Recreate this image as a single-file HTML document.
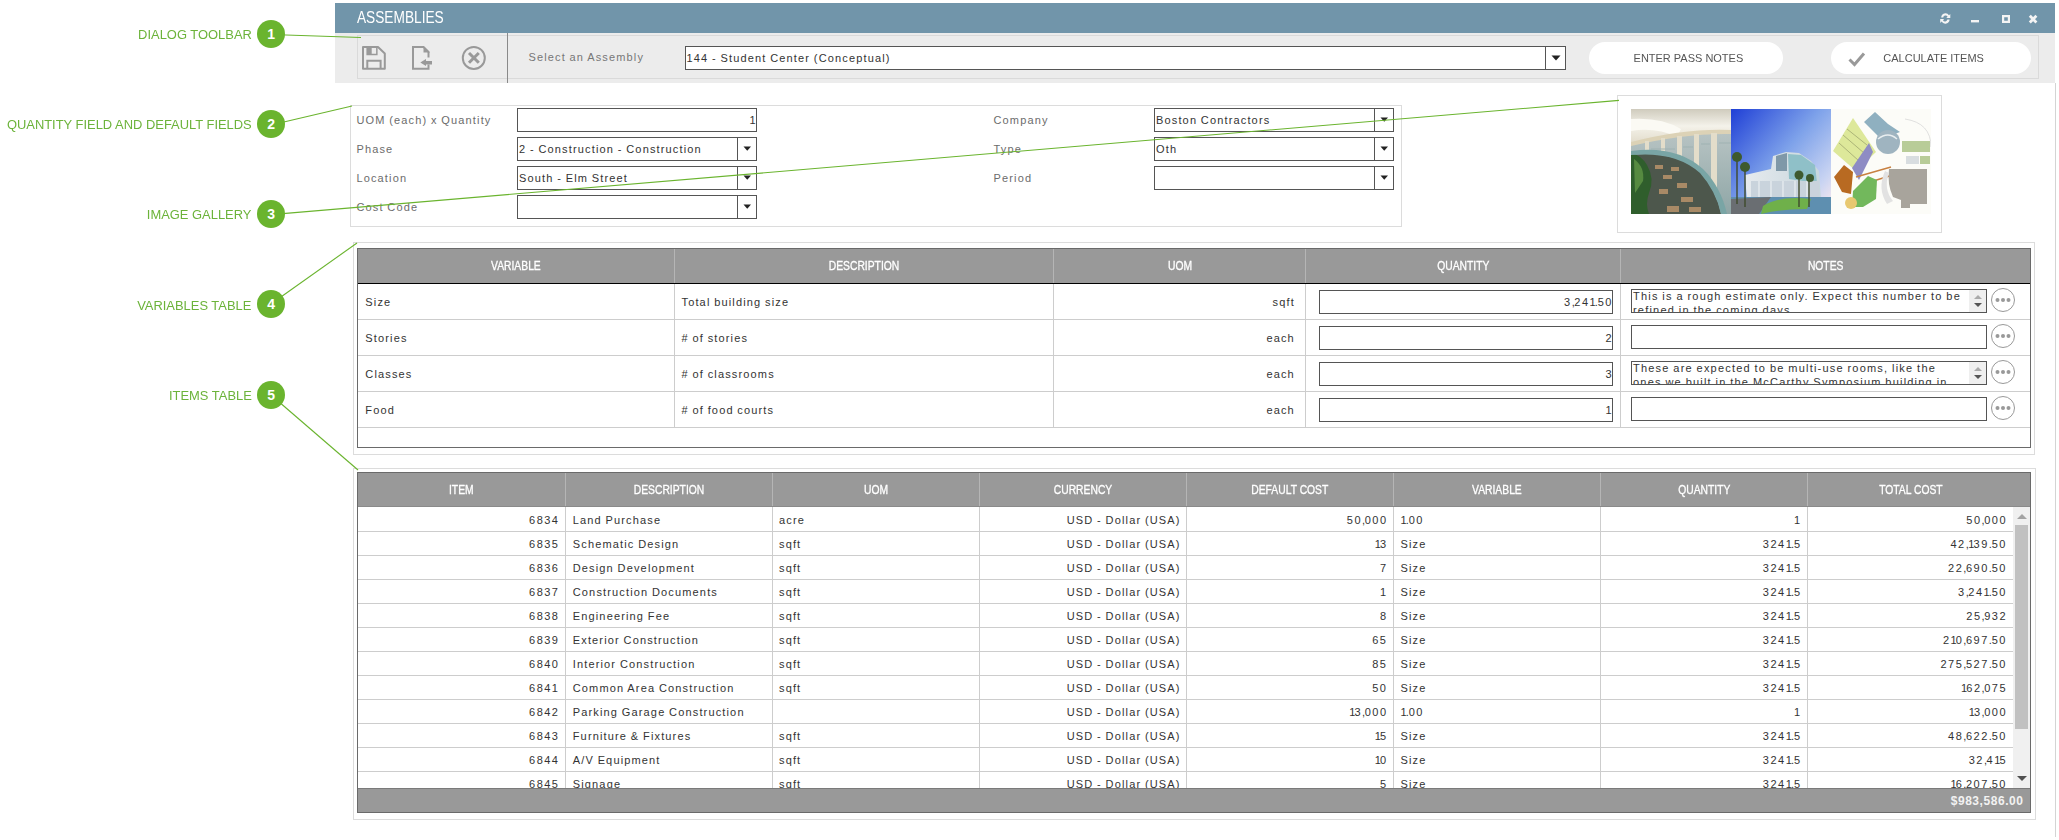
<!DOCTYPE html>
<html><head><meta charset="utf-8"><title>Assemblies</title>
<style>
html,body{margin:0;padding:0;background:#fff;}
body{width:2059px;height:840px;position:relative;overflow:hidden;font-family:"Liberation Sans", sans-serif;}
</style></head><body>
<div style="position:absolute;top:28.46px;font-size:13.4px;line-height:13.4px;color:#6cb33a;white-space:nowrap;right:1807.4px;"><span style="display:inline-block;transform:scaleX(0.965);transform-origin:right;">DIALOG TOOLBAR</span></div>
<div style="position:absolute;top:118.26px;font-size:13.4px;line-height:13.4px;color:#6cb33a;white-space:nowrap;right:1807.4px;"><span style="display:inline-block;transform:scaleX(0.965);transform-origin:right;">QUANTITY FIELD AND DEFAULT FIELDS</span></div>
<div style="position:absolute;top:207.96px;font-size:13.4px;line-height:13.4px;color:#6cb33a;white-space:nowrap;right:1807.4px;"><span style="display:inline-block;transform:scaleX(0.965);transform-origin:right;">IMAGE GALLERY</span></div>
<div style="position:absolute;top:298.66px;font-size:13.4px;line-height:13.4px;color:#6cb33a;white-space:nowrap;right:1807.4px;"><span style="display:inline-block;transform:scaleX(0.965);transform-origin:right;">VARIABLES TABLE</span></div>
<div style="position:absolute;top:389.46px;font-size:13.4px;line-height:13.4px;color:#6cb33a;white-space:nowrap;right:1807.4px;"><span style="display:inline-block;transform:scaleX(0.965);transform-origin:right;">ITEMS TABLE</span></div>
<div style="position:absolute;left:335px;top:3px;width:1720px;height:30px;box-sizing:border-box;background:#7195aa;"></div>
<div style="position:absolute;top:10.06px;font-size:16px;line-height:16px;color:#fff;white-space:nowrap;left:357px;"><span style="display:inline-block;transform:scaleX(0.855);transform-origin:left;">ASSEMBLIES</span></div>
<svg style="position:absolute;left:1936px;top:10px" width="110" height="18" viewBox="1936 10 110 18">
<g fill="#f4f4f4">
<path d="M1941.2 17.5 A4.3 4.3 0 0 1 1949 15.2 L1950.3 13.9 L1950.3 18 L1946.3 18 L1947.6 16.7 A2.4 2.4 0 0 0 1943.2 17.5 Z"/>
<path d="M1949.6 19.6 A4.3 4.3 0 0 1 1941.6 21.6 L1940.2 23 L1940.2 18.9 L1944.2 18.9 L1943 20.2 A2.4 2.4 0 0 0 1947.4 19.6 Z"/>
<rect x="1971" y="20" width="8" height="2.4"/>
<path d="M2002 15 H2010 V23 H2002 Z M2004.2 17.2 V20.8 H2007.8 V17.2 Z" fill-rule="evenodd"/>
</g>
<path d="M2029.8 15.8 L2036.4 22.4 M2036.4 15.8 L2029.8 22.4" stroke="#f4f4f4" stroke-width="2.8"/>
</svg>
<div style="position:absolute;left:335px;top:33px;width:1720px;height:50px;box-sizing:border-box;background:#ececec;"></div>
<div style="position:absolute;left:357px;top:35px;width:1682px;height:44px;box-sizing:border-box;border:1px solid #dadada;"></div>
<div style="position:absolute;left:507px;top:33px;width:1px;height:50px;box-sizing:border-box;background:#8a8a8a;"></div>
<svg style="position:absolute;left:355px;top:40px" width="140" height="36" viewBox="355 40 140 36">
<g fill="none" stroke="#999" stroke-width="2">
<path d="M363 47 H378 L384.8 53.5 V68.7 H363 Z" stroke-linejoin="round"/>
<path d="M367.3 68.7 V60.8 H380.6 V68.7"/>
</g>
<path d="M366.4 46.5 H377.6 V55.2 H366.4 Z M371.7 47.4 V53.7 H376.1 V47.4 Z" fill="#999" fill-rule="evenodd"/>
<g fill="none" stroke="#999" stroke-width="2">
<path d="M428.5 57.5 V52 L423.5 47 H413 V68.7 H428.5 V64.5"/>
</g>
<path d="M423.5 46 L430 52.5 H423.5 Z" fill="#999"/>
<path d="M420.3 62.5 L426 58.9 V61 H432 V64.4 H426 V65.9 Z" fill="#999"/>
<circle cx="473.8" cy="57.9" r="11" fill="none" stroke="#999" stroke-width="2"/>
<path d="M469 53 L478.8 62.8 M478.8 53 L469 62.8" stroke="#999" stroke-width="3"/>
</svg>
<div style="position:absolute;top:52.39px;font-size:11px;line-height:11px;color:#777;white-space:nowrap;letter-spacing:1.15px;word-spacing:-0.5px;left:528.4px;">Select an Assembly</div>
<div style="position:absolute;left:685px;top:46px;width:881px;height:24px;box-sizing:border-box;background:#fff;border:1px solid #555;"></div>
<div style="position:absolute;left:1545px;top:46px;width:1px;height:24px;box-sizing:border-box;background:#555;"></div>
<svg style="position:absolute;left:1551px;top:55px" width="10" height="6"><path d="M0.5 0.5 H9.5 L5 5.5 Z" fill="#222"/></svg>
<div style="position:absolute;top:52.79px;font-size:11px;line-height:11px;color:#333;white-space:nowrap;letter-spacing:1.15px;word-spacing:-0.5px;left:686.5px;">144 - Student Center (Conceptual)</div>
<div style="position:absolute;left:1589px;top:42px;width:194px;height:32px;box-sizing:border-box;background:#fff;border-radius:16px;"></div>
<div style="position:absolute;top:53.07px;font-size:11.5px;line-height:11.5px;color:#555;white-space:nowrap;left:1388.75px;width:600px;text-align:center;"><span style="display:inline-block;transform:scaleX(0.955);transform-origin:center;">ENTER PASS NOTES</span></div>
<div style="position:absolute;left:1831px;top:42px;width:200px;height:32px;box-sizing:border-box;background:#fff;border-radius:16px;"></div>
<svg style="position:absolute;left:1846px;top:50px" width="22" height="18"><path d="M3.5 9.5 L8.5 14.5 L18 3.5" fill="none" stroke="#999" stroke-width="3"/></svg>
<div style="position:absolute;top:53.07px;font-size:11.5px;line-height:11.5px;color:#555;white-space:nowrap;left:1634px;width:600px;text-align:center;"><span style="display:inline-block;transform:scaleX(0.955);transform-origin:center;">CALCULATE ITEMS</span></div>
<div style="position:absolute;left:2055px;top:83px;width:1px;height:754px;box-sizing:border-box;background:#d4d4d4;"></div>
<div style="position:absolute;left:350px;top:105px;width:1052px;height:122px;box-sizing:border-box;border:1px solid #dcdcdc;"></div>
<div style="position:absolute;top:115.09px;font-size:11px;line-height:11px;color:#6c6c6c;white-space:nowrap;letter-spacing:1.15px;word-spacing:-0.5px;left:356.4px;">UOM (each) x Quantity</div>
<div style="position:absolute;top:144.09px;font-size:11px;line-height:11px;color:#6c6c6c;white-space:nowrap;letter-spacing:1.15px;word-spacing:-0.5px;left:356.4px;">Phase</div>
<div style="position:absolute;top:173.09px;font-size:11px;line-height:11px;color:#6c6c6c;white-space:nowrap;letter-spacing:1.15px;word-spacing:-0.5px;left:356.4px;">Location</div>
<div style="position:absolute;top:202.09px;font-size:11px;line-height:11px;color:#6c6c6c;white-space:nowrap;letter-spacing:1.15px;word-spacing:-0.5px;left:356.4px;">Cost Code</div>
<div style="position:absolute;top:115.09px;font-size:11px;line-height:11px;color:#6c6c6c;white-space:nowrap;letter-spacing:1.15px;word-spacing:-0.5px;left:993.5px;">Company</div>
<div style="position:absolute;top:144.09px;font-size:11px;line-height:11px;color:#6c6c6c;white-space:nowrap;letter-spacing:1.15px;word-spacing:-0.5px;left:993.5px;">Type</div>
<div style="position:absolute;top:173.09px;font-size:11px;line-height:11px;color:#6c6c6c;white-space:nowrap;letter-spacing:1.15px;word-spacing:-0.5px;left:993.5px;">Period</div>
<div style="position:absolute;left:517px;top:108px;width:240px;height:24px;box-sizing:border-box;background:#fff;border:1px solid #555;"></div>
<div style="position:absolute;top:115.09px;font-size:11px;line-height:11px;color:#333;white-space:nowrap;letter-spacing:1.5px;right:1302.0px;">1</div>
<div style="position:absolute;left:517px;top:137px;width:240px;height:24px;box-sizing:border-box;background:#fff;border:1px solid #555;"></div>
<div style="position:absolute;left:737px;top:137px;width:1px;height:24px;box-sizing:border-box;background:#555;"></div>
<svg style="position:absolute;left:743px;top:146px" width="9" height="6"><path d="M0.5 0.5 H8 L4.25 4.8 Z" fill="#222"/></svg>
<div style="position:absolute;top:144.09px;font-size:11px;line-height:11px;color:#333;white-space:nowrap;letter-spacing:1.15px;word-spacing:-0.5px;left:519px;">2 - Construction - Construction</div>
<div style="position:absolute;left:517px;top:166px;width:240px;height:24px;box-sizing:border-box;background:#fff;border:1px solid #555;"></div>
<div style="position:absolute;left:737px;top:166px;width:1px;height:24px;box-sizing:border-box;background:#555;"></div>
<svg style="position:absolute;left:743px;top:175px" width="9" height="6"><path d="M0.5 0.5 H8 L4.25 4.8 Z" fill="#222"/></svg>
<div style="position:absolute;top:173.09px;font-size:11px;line-height:11px;color:#333;white-space:nowrap;letter-spacing:1.15px;word-spacing:-0.5px;left:519px;">South - Elm Street</div>
<div style="position:absolute;left:517px;top:195px;width:240px;height:24px;box-sizing:border-box;background:#fff;border:1px solid #555;"></div>
<div style="position:absolute;left:737px;top:195px;width:1px;height:24px;box-sizing:border-box;background:#555;"></div>
<svg style="position:absolute;left:743px;top:204px" width="9" height="6"><path d="M0.5 0.5 H8 L4.25 4.8 Z" fill="#222"/></svg>
<div style="position:absolute;left:1154px;top:108px;width:240px;height:24px;box-sizing:border-box;background:#fff;border:1px solid #555;"></div>
<div style="position:absolute;left:1374px;top:108px;width:1px;height:24px;box-sizing:border-box;background:#555;"></div>
<svg style="position:absolute;left:1380px;top:117px" width="9" height="6"><path d="M0.5 0.5 H8 L4.25 4.8 Z" fill="#222"/></svg>
<div style="position:absolute;top:115.09px;font-size:11px;line-height:11px;color:#333;white-space:nowrap;letter-spacing:1.15px;word-spacing:-0.5px;left:1156px;">Boston Contractors</div>
<div style="position:absolute;left:1154px;top:137px;width:240px;height:24px;box-sizing:border-box;background:#fff;border:1px solid #555;"></div>
<div style="position:absolute;left:1374px;top:137px;width:1px;height:24px;box-sizing:border-box;background:#555;"></div>
<svg style="position:absolute;left:1380px;top:146px" width="9" height="6"><path d="M0.5 0.5 H8 L4.25 4.8 Z" fill="#222"/></svg>
<div style="position:absolute;top:144.09px;font-size:11px;line-height:11px;color:#333;white-space:nowrap;letter-spacing:1.15px;word-spacing:-0.5px;left:1156px;">Oth</div>
<div style="position:absolute;left:1154px;top:166px;width:240px;height:24px;box-sizing:border-box;background:#fff;border:1px solid #555;"></div>
<div style="position:absolute;left:1374px;top:166px;width:1px;height:24px;box-sizing:border-box;background:#555;"></div>
<svg style="position:absolute;left:1380px;top:175px" width="9" height="6"><path d="M0.5 0.5 H8 L4.25 4.8 Z" fill="#222"/></svg>
<div style="position:absolute;left:1617px;top:95px;width:325px;height:138px;box-sizing:border-box;border:1px solid #dcdcdc;"></div>
<svg style="position:absolute;left:1631px;top:109px;filter:blur(0.5px)" width="300" height="105" viewBox="0 0 300 105">
<defs>
<linearGradient id="sky" x1="0" y1="0" x2="1" y2="0.9"><stop offset="0" stop-color="#1f3fd6"/><stop offset="0.5" stop-color="#7ea2ea"/><stop offset="0.85" stop-color="#c9d4f2"/><stop offset="1" stop-color="#f3e6ee"/></linearGradient>
<linearGradient id="ceil" x1="0" y1="0" x2="0" y2="1"><stop offset="0" stop-color="#cfcbbd"/><stop offset="0.5" stop-color="#f4f2ea"/><stop offset="1" stop-color="#e2dccb"/></linearGradient>
<linearGradient id="win" x1="0" y1="0" x2="0" y2="1"><stop offset="0" stop-color="#c3cccc"/><stop offset="1" stop-color="#8fa6a6"/></linearGradient>
<linearGradient id="bld" x1="0" y1="0" x2="1" y2="0"><stop offset="0" stop-color="#e6eaee"/><stop offset="1" stop-color="#c7d6dc"/></linearGradient>
</defs>
<rect x="0" y="0" width="100" height="105" fill="url(#win)"/>
<path d="M0 0 H100 V22 Q55 20 0 34 Z" fill="url(#ceil)"/>
<path d="M0 10 Q30 8 50 20 L46 28 Q25 18 0 22 Z" fill="#fbfaf4"/>
<path d="M0 33 Q55 19 100 21 V25 Q55 24 0 37 Z" fill="#dcd2b6"/>
<g fill="#e3ddca"><rect x="14" y="32" width="4" height="40"/><rect x="30" y="29" width="4" height="45"/><rect x="46" y="27" width="5" height="60"/><rect x="63" y="25" width="5" height="70"/><rect x="80" y="24" width="6" height="81"/></g>
<g stroke="#9fb2b2" stroke-width="1"><path d="M20 40 H44 M52 38 H62 M70 35 H79 M88 34 H100"/></g>
<path d="M0 46 Q45 41 70 64 Q86 82 90 105 H0 Z" fill="#4d574c"/>
<path d="M0 44 Q10 46 16 56 Q24 70 18 84 Q14 95 18 105 H0 Z" fill="#2f5e2c"/>
<path d="M3 50 Q14 58 12 72 L4 84 Z" fill="#568a40"/>
<g fill="#a88a66"><rect x="24" y="56" width="8" height="4"/><rect x="32" y="66" width="9" height="4"/><rect x="40" y="58" width="8" height="4"/><rect x="28" y="80" width="9" height="5"/><rect x="46" y="74" width="10" height="5"/><rect x="50" y="88" width="12" height="5"/><rect x="36" y="97" width="12" height="6"/><rect x="58" y="98" width="12" height="5"/></g>
<path d="M0 42 Q45 36 72 60 Q90 78 96 105 L90 105 Q85 82 69 64 Q45 42 0 46 Z" fill="#79a5a5"/>
<rect x="100" y="0" width="100" height="105" fill="url(#sky)"/>
<path d="M114 66 L140 60 L142 47 L155 43 L168 44 L180 52 L188 62 L190 90 L116 92 Z" fill="url(#bld)"/>
<path d="M145 47 L156 44 L156 62 L145 62 Z" fill="#7f98a8"/>
<path d="M157 45 L170 46 L184 56 L186 74 L158 70 Z" fill="#8fc0c8"/>
<path d="M120 72 H188 V91 H120 Z" fill="#c9d3dc"/>
<g stroke="#e9eef2" stroke-width="1.2"><path d="M128 72 V91 M140 72 V91 M152 72 V91 M164 72 V91 M176 72 V91"/></g>
<path d="M100 88 H200 V105 H100 Z" fill="#5e8fb0"/>
<path d="M100 90 L140 88 L128 105 H100 Z" fill="#6a6e72"/>
<path d="M132 97 Q150 86 180 90 L176 100 Q150 100 130 105 Z" fill="#6fb04a"/>
<g stroke="#3f4a2c" stroke-width="1.4" fill="none"><path d="M106 95 V48 M114 98 V58 M168 98 V66 M178 98 V68"/></g>
<g fill="#3e5a2e"><circle cx="106" cy="48" r="5"/><circle cx="114" cy="58" r="5"/><circle cx="168" cy="66" r="4.5"/><circle cx="179" cy="69" r="4"/></g>
<rect x="200" y="0" width="100" height="105" fill="#fcfcf8"/>
<path d="M274 10 Q300 14 300 38" fill="none" stroke="#d8d8d8" stroke-width="0.8"/>
<path d="M233 13 L244 3 L257 15 L269 23 L250 30 Z" fill="#8fb0c0"/>
<path d="M202 42 L222 9 L245 43 L225 62 Z" fill="#dde89a"/>
<g stroke="#8a9060" stroke-width="0.6" fill="none"><path d="M212 26 L233 44 M216 20 L236 36 M208 34 L228 52"/></g>
<circle cx="257" cy="33" r="12" fill="#9fb4c0"/>
<path d="M247 30 Q257 22 266 30" fill="none" stroke="#e8eef0" stroke-width="1.5"/>
<path d="M221 59 L238 34 L242 43 L228 71 Z" fill="#8e8cc4"/>
<path d="M203 68 L213 56 L222 63 L220 85 L211 83 Z" fill="#b86a22"/>
<path d="M225 68 L260 58 M236 74 L268 64" stroke="#c88040" stroke-width="1.5"/>
<path d="M221 98 L222 82 L237 67 L246 71 L245 90 L232 98 Z" fill="#72b85c"/>
<circle cx="220" cy="94" r="6" fill="#e8c870"/>
<rect x="271" y="32" width="28" height="11" fill="#b8cc98"/>
<rect x="275" y="47" width="13" height="8" fill="#d8dde0"/>
<rect x="289" y="47" width="10" height="8" fill="#b8cc98"/>
<path d="M258 60 H296 V95 H279 V99 H270 V91 L262 88 Q256 75 258 60 Z" fill="#a8a49c"/>
<path d="M258 64 Q252 80 262 92 L256 95 Q246 80 254 62 Z" fill="#e2e2e2"/>
</svg>
<div style="position:absolute;left:353px;top:242px;width:1682px;height:213px;box-sizing:border-box;border:1px solid #dcdcdc;"></div>
<div style="position:absolute;left:357px;top:248px;width:1674px;height:200px;box-sizing:border-box;border:1px solid #6a6a6a;background:#fff;"></div>
<div style="position:absolute;left:358px;top:249px;width:1672px;height:34px;box-sizing:border-box;background:#999;"></div>
<div style="position:absolute;left:358px;top:283px;width:1672px;height:1px;box-sizing:border-box;background:#000;"></div>
<div style="position:absolute;left:674.0px;top:249px;width:1px;height:34px;box-sizing:border-box;background:#b5b5b5;"></div>
<div style="position:absolute;left:674.0px;top:284px;width:1px;height:143.5px;box-sizing:border-box;background:#cdcdcd;"></div>
<div style="position:absolute;left:1053.0px;top:249px;width:1px;height:34px;box-sizing:border-box;background:#b5b5b5;"></div>
<div style="position:absolute;left:1053.0px;top:284px;width:1px;height:143.5px;box-sizing:border-box;background:#cdcdcd;"></div>
<div style="position:absolute;left:1305.0px;top:249px;width:1px;height:34px;box-sizing:border-box;background:#b5b5b5;"></div>
<div style="position:absolute;left:1305.0px;top:284px;width:1px;height:143.5px;box-sizing:border-box;background:#cdcdcd;"></div>
<div style="position:absolute;left:1620.0px;top:249px;width:1px;height:34px;box-sizing:border-box;background:#b5b5b5;"></div>
<div style="position:absolute;left:1620.0px;top:284px;width:1px;height:143.5px;box-sizing:border-box;background:#cdcdcd;"></div>
<div style="position:absolute;top:260.04px;font-size:12px;line-height:12px;color:#fff;white-space:nowrap;left:216.0px;width:600px;text-align:center;-webkit-text-stroke:0.3px #fff;"><span style="display:inline-block;transform:scaleX(0.86);transform-origin:center;">VARIABLE</span></div>
<div style="position:absolute;top:260.04px;font-size:12px;line-height:12px;color:#fff;white-space:nowrap;left:564.0px;width:600px;text-align:center;-webkit-text-stroke:0.3px #fff;"><span style="display:inline-block;transform:scaleX(0.86);transform-origin:center;">DESCRIPTION</span></div>
<div style="position:absolute;top:260.04px;font-size:12px;line-height:12px;color:#fff;white-space:nowrap;left:879.5px;width:600px;text-align:center;-webkit-text-stroke:0.3px #fff;"><span style="display:inline-block;transform:scaleX(0.86);transform-origin:center;">UOM</span></div>
<div style="position:absolute;top:260.04px;font-size:12px;line-height:12px;color:#fff;white-space:nowrap;left:1163.0px;width:600px;text-align:center;-webkit-text-stroke:0.3px #fff;"><span style="display:inline-block;transform:scaleX(0.86);transform-origin:center;">QUANTITY</span></div>
<div style="position:absolute;top:260.04px;font-size:12px;line-height:12px;color:#fff;white-space:nowrap;left:1525.5px;width:600px;text-align:center;-webkit-text-stroke:0.3px #fff;"><span style="display:inline-block;transform:scaleX(0.86);transform-origin:center;">NOTES</span></div>
<div style="position:absolute;left:358px;top:319px;width:1672px;height:1px;box-sizing:border-box;background:#cdcdcd;"></div>
<div style="position:absolute;left:358px;top:355px;width:1672px;height:1px;box-sizing:border-box;background:#cdcdcd;"></div>
<div style="position:absolute;left:358px;top:391px;width:1672px;height:1px;box-sizing:border-box;background:#cdcdcd;"></div>
<div style="position:absolute;left:358px;top:427px;width:1672px;height:1px;box-sizing:border-box;background:#cdcdcd;"></div>
<div style="position:absolute;top:296.69px;font-size:11px;line-height:11px;color:#333;white-space:nowrap;letter-spacing:1.15px;word-spacing:-0.5px;left:365.3px;">Size</div>
<div style="position:absolute;top:296.69px;font-size:11px;line-height:11px;color:#333;white-space:nowrap;letter-spacing:1.15px;word-spacing:-0.5px;left:681.5px;">Total building size</div>
<div style="position:absolute;top:296.69px;font-size:11px;line-height:11px;color:#333;white-space:nowrap;letter-spacing:1.15px;word-spacing:-0.5px;right:764.1499999999999px;">sqft</div>
<div style="position:absolute;left:1319px;top:290px;width:294px;height:24px;box-sizing:border-box;background:#fff;border:1px solid #555;"></div>
<div style="position:absolute;top:296.69px;font-size:11px;line-height:11px;color:#333;white-space:nowrap;letter-spacing:1.5px;right:446.0px;">3<span style="margin-right:-2.0px">,</span>24<span style="margin-right:-2.4px">1</span><span style="margin-right:-1.6px">.</span>50</div>
<div style="position:absolute;left:1631px;top:289px;width:356px;height:24px;box-sizing:border-box;background:#fff;border:1px solid #555;"></div>
<div style="position:absolute;left:1632px;top:290px;width:337px;height:22px;overflow:hidden;"><div style="position:absolute;left:1px;top:-1px;font-size:11px;line-height:14px;color:#333;letter-spacing:1.2px;word-spacing:-0.5px;white-space:nowrap;">This is a rough estimate only. Expect this number to be<br>refined in the coming days</div></div>
<div style="position:absolute;left:1969px;top:290px;width:17px;height:22px;box-sizing:border-box;background:#efefef;"></div>
<svg style="position:absolute;left:1972px;top:293px" width="12" height="16"><path d="M2 6 H10 L6 2 Z" fill="#aaa"/><path d="M2 10 H10 L6 14 Z" fill="#555"/></svg>
<svg style="position:absolute;left:1989px;top:286px" width="28" height="28"><circle cx="14" cy="14" r="11.5" fill="#fff" stroke="#999" stroke-width="1"/><circle cx="8.5" cy="14" r="2" fill="#999"/><circle cx="14" cy="14" r="2" fill="#999"/><circle cx="19.5" cy="14" r="2" fill="#999"/></svg>
<div style="position:absolute;top:332.69px;font-size:11px;line-height:11px;color:#333;white-space:nowrap;letter-spacing:1.15px;word-spacing:-0.5px;left:365.3px;">Stories</div>
<div style="position:absolute;top:332.69px;font-size:11px;line-height:11px;color:#333;white-space:nowrap;letter-spacing:1.15px;word-spacing:-0.5px;left:681.5px;"># of stories</div>
<div style="position:absolute;top:332.69px;font-size:11px;line-height:11px;color:#333;white-space:nowrap;letter-spacing:1.15px;word-spacing:-0.5px;right:764.1499999999999px;">each</div>
<div style="position:absolute;left:1319px;top:326px;width:294px;height:24px;box-sizing:border-box;background:#fff;border:1px solid #555;"></div>
<div style="position:absolute;top:332.69px;font-size:11px;line-height:11px;color:#333;white-space:nowrap;letter-spacing:1.5px;right:446.0px;">2</div>
<div style="position:absolute;left:1631px;top:325px;width:356px;height:24px;box-sizing:border-box;background:#fff;border:1px solid #555;"></div>
<svg style="position:absolute;left:1989px;top:322px" width="28" height="28"><circle cx="14" cy="14" r="11.5" fill="#fff" stroke="#999" stroke-width="1"/><circle cx="8.5" cy="14" r="2" fill="#999"/><circle cx="14" cy="14" r="2" fill="#999"/><circle cx="19.5" cy="14" r="2" fill="#999"/></svg>
<div style="position:absolute;top:368.69px;font-size:11px;line-height:11px;color:#333;white-space:nowrap;letter-spacing:1.15px;word-spacing:-0.5px;left:365.3px;">Classes</div>
<div style="position:absolute;top:368.69px;font-size:11px;line-height:11px;color:#333;white-space:nowrap;letter-spacing:1.15px;word-spacing:-0.5px;left:681.5px;"># of classrooms</div>
<div style="position:absolute;top:368.69px;font-size:11px;line-height:11px;color:#333;white-space:nowrap;letter-spacing:1.15px;word-spacing:-0.5px;right:764.1499999999999px;">each</div>
<div style="position:absolute;left:1319px;top:362px;width:294px;height:24px;box-sizing:border-box;background:#fff;border:1px solid #555;"></div>
<div style="position:absolute;top:368.69px;font-size:11px;line-height:11px;color:#333;white-space:nowrap;letter-spacing:1.5px;right:446.0px;">3</div>
<div style="position:absolute;left:1631px;top:361px;width:356px;height:24px;box-sizing:border-box;background:#fff;border:1px solid #555;"></div>
<div style="position:absolute;left:1632px;top:362px;width:337px;height:22px;overflow:hidden;"><div style="position:absolute;left:1px;top:-1px;font-size:11px;line-height:14px;color:#333;letter-spacing:1.2px;word-spacing:-0.5px;white-space:nowrap;">These are expected to be multi-use rooms, like the<br>ones we built in the McCarthy Symposium building in</div></div>
<div style="position:absolute;left:1969px;top:362px;width:17px;height:22px;box-sizing:border-box;background:#efefef;"></div>
<svg style="position:absolute;left:1972px;top:365px" width="12" height="16"><path d="M2 6 H10 L6 2 Z" fill="#aaa"/><path d="M2 10 H10 L6 14 Z" fill="#555"/></svg>
<svg style="position:absolute;left:1989px;top:358px" width="28" height="28"><circle cx="14" cy="14" r="11.5" fill="#fff" stroke="#999" stroke-width="1"/><circle cx="8.5" cy="14" r="2" fill="#999"/><circle cx="14" cy="14" r="2" fill="#999"/><circle cx="19.5" cy="14" r="2" fill="#999"/></svg>
<div style="position:absolute;top:404.69px;font-size:11px;line-height:11px;color:#333;white-space:nowrap;letter-spacing:1.15px;word-spacing:-0.5px;left:365.3px;">Food</div>
<div style="position:absolute;top:404.69px;font-size:11px;line-height:11px;color:#333;white-space:nowrap;letter-spacing:1.15px;word-spacing:-0.5px;left:681.5px;"># of food courts</div>
<div style="position:absolute;top:404.69px;font-size:11px;line-height:11px;color:#333;white-space:nowrap;letter-spacing:1.15px;word-spacing:-0.5px;right:764.1499999999999px;">each</div>
<div style="position:absolute;left:1319px;top:398px;width:294px;height:24px;box-sizing:border-box;background:#fff;border:1px solid #555;"></div>
<div style="position:absolute;top:404.69px;font-size:11px;line-height:11px;color:#333;white-space:nowrap;letter-spacing:1.5px;right:446.0px;">1</div>
<div style="position:absolute;left:1631px;top:397px;width:356px;height:24px;box-sizing:border-box;background:#fff;border:1px solid #555;"></div>
<svg style="position:absolute;left:1989px;top:394px" width="28" height="28"><circle cx="14" cy="14" r="11.5" fill="#fff" stroke="#999" stroke-width="1"/><circle cx="8.5" cy="14" r="2" fill="#999"/><circle cx="14" cy="14" r="2" fill="#999"/><circle cx="19.5" cy="14" r="2" fill="#999"/></svg>
<div style="position:absolute;left:353px;top:468px;width:1683px;height:352px;box-sizing:border-box;border:1px solid #dcdcdc;"></div>
<div style="position:absolute;left:357px;top:472px;width:1674px;height:341px;box-sizing:border-box;border:1px solid #6a6a6a;background:#fff;"></div>
<div style="position:absolute;left:358px;top:473px;width:1672px;height:34px;box-sizing:border-box;background:#999;"></div>
<div style="position:absolute;left:358px;top:506px;width:1672px;height:1px;box-sizing:border-box;background:#8a8a8a;"></div>
<div style="position:absolute;left:565.0px;top:473px;width:1px;height:33px;box-sizing:border-box;background:#b5b5b5;"></div>
<div style="position:absolute;left:565.0px;top:507px;width:1px;height:281px;box-sizing:border-box;background:#cdcdcd;"></div>
<div style="position:absolute;left:772.0px;top:473px;width:1px;height:33px;box-sizing:border-box;background:#b5b5b5;"></div>
<div style="position:absolute;left:772.0px;top:507px;width:1px;height:281px;box-sizing:border-box;background:#cdcdcd;"></div>
<div style="position:absolute;left:979.0px;top:473px;width:1px;height:33px;box-sizing:border-box;background:#b5b5b5;"></div>
<div style="position:absolute;left:979.0px;top:507px;width:1px;height:281px;box-sizing:border-box;background:#cdcdcd;"></div>
<div style="position:absolute;left:1186.0px;top:473px;width:1px;height:33px;box-sizing:border-box;background:#b5b5b5;"></div>
<div style="position:absolute;left:1186.0px;top:507px;width:1px;height:281px;box-sizing:border-box;background:#cdcdcd;"></div>
<div style="position:absolute;left:1393.0px;top:473px;width:1px;height:33px;box-sizing:border-box;background:#b5b5b5;"></div>
<div style="position:absolute;left:1393.0px;top:507px;width:1px;height:281px;box-sizing:border-box;background:#cdcdcd;"></div>
<div style="position:absolute;left:1600.0px;top:473px;width:1px;height:33px;box-sizing:border-box;background:#b5b5b5;"></div>
<div style="position:absolute;left:1600.0px;top:507px;width:1px;height:281px;box-sizing:border-box;background:#cdcdcd;"></div>
<div style="position:absolute;left:1807.0px;top:473px;width:1px;height:33px;box-sizing:border-box;background:#b5b5b5;"></div>
<div style="position:absolute;left:1807.0px;top:507px;width:1px;height:281px;box-sizing:border-box;background:#cdcdcd;"></div>
<div style="position:absolute;top:483.64px;font-size:12px;line-height:12px;color:#fff;white-space:nowrap;left:161.5px;width:600px;text-align:center;-webkit-text-stroke:0.3px #fff;"><span style="display:inline-block;transform:scaleX(0.86);transform-origin:center;">ITEM</span></div>
<div style="position:absolute;top:483.64px;font-size:12px;line-height:12px;color:#fff;white-space:nowrap;left:369.0px;width:600px;text-align:center;-webkit-text-stroke:0.3px #fff;"><span style="display:inline-block;transform:scaleX(0.86);transform-origin:center;">DESCRIPTION</span></div>
<div style="position:absolute;top:483.64px;font-size:12px;line-height:12px;color:#fff;white-space:nowrap;left:576.0px;width:600px;text-align:center;-webkit-text-stroke:0.3px #fff;"><span style="display:inline-block;transform:scaleX(0.86);transform-origin:center;">UOM</span></div>
<div style="position:absolute;top:483.64px;font-size:12px;line-height:12px;color:#fff;white-space:nowrap;left:783.0px;width:600px;text-align:center;-webkit-text-stroke:0.3px #fff;"><span style="display:inline-block;transform:scaleX(0.86);transform-origin:center;">CURRENCY</span></div>
<div style="position:absolute;top:483.64px;font-size:12px;line-height:12px;color:#fff;white-space:nowrap;left:990.0px;width:600px;text-align:center;-webkit-text-stroke:0.3px #fff;"><span style="display:inline-block;transform:scaleX(0.86);transform-origin:center;">DEFAULT COST</span></div>
<div style="position:absolute;top:483.64px;font-size:12px;line-height:12px;color:#fff;white-space:nowrap;left:1197.0px;width:600px;text-align:center;-webkit-text-stroke:0.3px #fff;"><span style="display:inline-block;transform:scaleX(0.86);transform-origin:center;">VARIABLE</span></div>
<div style="position:absolute;top:483.64px;font-size:12px;line-height:12px;color:#fff;white-space:nowrap;left:1404.0px;width:600px;text-align:center;-webkit-text-stroke:0.3px #fff;"><span style="display:inline-block;transform:scaleX(0.86);transform-origin:center;">QUANTITY</span></div>
<div style="position:absolute;top:483.64px;font-size:12px;line-height:12px;color:#fff;white-space:nowrap;left:1610.9px;width:600px;text-align:center;-webkit-text-stroke:0.3px #fff;"><span style="display:inline-block;transform:scaleX(0.86);transform-origin:center;">TOTAL COST</span></div>
<div style="position:absolute;left:358px;top:507px;width:1672px;height:281px;overflow:hidden;"><div style="position:absolute;top:7.69px;right:1470.50px;font-size:11px;line-height:11px;color:#333;letter-spacing:1.5px;word-spacing:0.0px;white-space:nowrap;">6834</div><div style="position:absolute;top:7.69px;left:214.75px;font-size:11px;line-height:11px;color:#333;letter-spacing:1.15px;word-spacing:-0.5px;white-space:nowrap;">Land Purchase</div><div style="position:absolute;top:7.69px;left:421px;font-size:11px;line-height:11px;color:#333;letter-spacing:1.15px;word-spacing:-0.5px;white-space:nowrap;">acre</div><div style="position:absolute;top:7.69px;right:849.35px;font-size:11px;line-height:11px;color:#333;letter-spacing:1.15px;word-spacing:-0.5px;white-space:nowrap;">USD - Dollar (USA)</div><div style="position:absolute;top:7.69px;right:642.50px;font-size:11px;line-height:11px;color:#333;letter-spacing:1.5px;word-spacing:0.0px;white-space:nowrap;">50<span style="margin-right:-2.0px">,</span>000</div><div style="position:absolute;top:7.69px;left:1042.5px;font-size:11px;line-height:11px;color:#333;letter-spacing:1.5px;word-spacing:0.0px;white-space:nowrap;"><span style="margin-right:-2.4px">1</span><span style="margin-right:-1.6px">.</span>00</div><div style="position:absolute;top:7.69px;right:228.50px;font-size:11px;line-height:11px;color:#333;letter-spacing:1.5px;word-spacing:0.0px;white-space:nowrap;">1</div><div style="position:absolute;top:7.69px;right:23.00px;font-size:11px;line-height:11px;color:#333;letter-spacing:1.5px;word-spacing:0.0px;white-space:nowrap;">50<span style="margin-right:-2.0px">,</span>000</div><div style="position:absolute;left:0;top:23.5px;width:1655px;height:1px;background:#cdcdcd;"></div><div style="position:absolute;top:31.69px;right:1470.50px;font-size:11px;line-height:11px;color:#333;letter-spacing:1.5px;word-spacing:0.0px;white-space:nowrap;">6835</div><div style="position:absolute;top:31.69px;left:214.75px;font-size:11px;line-height:11px;color:#333;letter-spacing:1.15px;word-spacing:-0.5px;white-space:nowrap;">Schematic Design</div><div style="position:absolute;top:31.69px;left:421px;font-size:11px;line-height:11px;color:#333;letter-spacing:1.15px;word-spacing:-0.5px;white-space:nowrap;">sqft</div><div style="position:absolute;top:31.69px;right:849.35px;font-size:11px;line-height:11px;color:#333;letter-spacing:1.15px;word-spacing:-0.5px;white-space:nowrap;">USD - Dollar (USA)</div><div style="position:absolute;top:31.69px;right:642.50px;font-size:11px;line-height:11px;color:#333;letter-spacing:1.5px;word-spacing:0.0px;white-space:nowrap;"><span style="margin-right:-2.4px">1</span>3</div><div style="position:absolute;top:31.69px;left:1042.5px;font-size:11px;line-height:11px;color:#333;letter-spacing:1.15px;word-spacing:-0.5px;white-space:nowrap;">Size</div><div style="position:absolute;top:31.69px;right:228.50px;font-size:11px;line-height:11px;color:#333;letter-spacing:1.5px;word-spacing:0.0px;white-space:nowrap;">324<span style="margin-right:-2.4px">1</span><span style="margin-right:-1.6px">.</span>5</div><div style="position:absolute;top:31.69px;right:23.00px;font-size:11px;line-height:11px;color:#333;letter-spacing:1.5px;word-spacing:0.0px;white-space:nowrap;">42<span style="margin-right:-2.0px">,</span><span style="margin-right:-2.4px">1</span>39<span style="margin-right:-1.6px">.</span>50</div><div style="position:absolute;left:0;top:47.5px;width:1655px;height:1px;background:#cdcdcd;"></div><div style="position:absolute;top:55.69px;right:1470.50px;font-size:11px;line-height:11px;color:#333;letter-spacing:1.5px;word-spacing:0.0px;white-space:nowrap;">6836</div><div style="position:absolute;top:55.69px;left:214.75px;font-size:11px;line-height:11px;color:#333;letter-spacing:1.15px;word-spacing:-0.5px;white-space:nowrap;">Design Development</div><div style="position:absolute;top:55.69px;left:421px;font-size:11px;line-height:11px;color:#333;letter-spacing:1.15px;word-spacing:-0.5px;white-space:nowrap;">sqft</div><div style="position:absolute;top:55.69px;right:849.35px;font-size:11px;line-height:11px;color:#333;letter-spacing:1.15px;word-spacing:-0.5px;white-space:nowrap;">USD - Dollar (USA)</div><div style="position:absolute;top:55.69px;right:642.50px;font-size:11px;line-height:11px;color:#333;letter-spacing:1.5px;word-spacing:0.0px;white-space:nowrap;">7</div><div style="position:absolute;top:55.69px;left:1042.5px;font-size:11px;line-height:11px;color:#333;letter-spacing:1.15px;word-spacing:-0.5px;white-space:nowrap;">Size</div><div style="position:absolute;top:55.69px;right:228.50px;font-size:11px;line-height:11px;color:#333;letter-spacing:1.5px;word-spacing:0.0px;white-space:nowrap;">324<span style="margin-right:-2.4px">1</span><span style="margin-right:-1.6px">.</span>5</div><div style="position:absolute;top:55.69px;right:23.00px;font-size:11px;line-height:11px;color:#333;letter-spacing:1.5px;word-spacing:0.0px;white-space:nowrap;">22<span style="margin-right:-2.0px">,</span>690<span style="margin-right:-1.6px">.</span>50</div><div style="position:absolute;left:0;top:71.5px;width:1655px;height:1px;background:#cdcdcd;"></div><div style="position:absolute;top:79.69px;right:1470.50px;font-size:11px;line-height:11px;color:#333;letter-spacing:1.5px;word-spacing:0.0px;white-space:nowrap;">6837</div><div style="position:absolute;top:79.69px;left:214.75px;font-size:11px;line-height:11px;color:#333;letter-spacing:1.15px;word-spacing:-0.5px;white-space:nowrap;">Construction Documents</div><div style="position:absolute;top:79.69px;left:421px;font-size:11px;line-height:11px;color:#333;letter-spacing:1.15px;word-spacing:-0.5px;white-space:nowrap;">sqft</div><div style="position:absolute;top:79.69px;right:849.35px;font-size:11px;line-height:11px;color:#333;letter-spacing:1.15px;word-spacing:-0.5px;white-space:nowrap;">USD - Dollar (USA)</div><div style="position:absolute;top:79.69px;right:642.50px;font-size:11px;line-height:11px;color:#333;letter-spacing:1.5px;word-spacing:0.0px;white-space:nowrap;">1</div><div style="position:absolute;top:79.69px;left:1042.5px;font-size:11px;line-height:11px;color:#333;letter-spacing:1.15px;word-spacing:-0.5px;white-space:nowrap;">Size</div><div style="position:absolute;top:79.69px;right:228.50px;font-size:11px;line-height:11px;color:#333;letter-spacing:1.5px;word-spacing:0.0px;white-space:nowrap;">324<span style="margin-right:-2.4px">1</span><span style="margin-right:-1.6px">.</span>5</div><div style="position:absolute;top:79.69px;right:23.00px;font-size:11px;line-height:11px;color:#333;letter-spacing:1.5px;word-spacing:0.0px;white-space:nowrap;">3<span style="margin-right:-2.0px">,</span>24<span style="margin-right:-2.4px">1</span><span style="margin-right:-1.6px">.</span>50</div><div style="position:absolute;left:0;top:95.5px;width:1655px;height:1px;background:#cdcdcd;"></div><div style="position:absolute;top:103.69px;right:1470.50px;font-size:11px;line-height:11px;color:#333;letter-spacing:1.5px;word-spacing:0.0px;white-space:nowrap;">6838</div><div style="position:absolute;top:103.69px;left:214.75px;font-size:11px;line-height:11px;color:#333;letter-spacing:1.15px;word-spacing:-0.5px;white-space:nowrap;">Engineering Fee</div><div style="position:absolute;top:103.69px;left:421px;font-size:11px;line-height:11px;color:#333;letter-spacing:1.15px;word-spacing:-0.5px;white-space:nowrap;">sqft</div><div style="position:absolute;top:103.69px;right:849.35px;font-size:11px;line-height:11px;color:#333;letter-spacing:1.15px;word-spacing:-0.5px;white-space:nowrap;">USD - Dollar (USA)</div><div style="position:absolute;top:103.69px;right:642.50px;font-size:11px;line-height:11px;color:#333;letter-spacing:1.5px;word-spacing:0.0px;white-space:nowrap;">8</div><div style="position:absolute;top:103.69px;left:1042.5px;font-size:11px;line-height:11px;color:#333;letter-spacing:1.15px;word-spacing:-0.5px;white-space:nowrap;">Size</div><div style="position:absolute;top:103.69px;right:228.50px;font-size:11px;line-height:11px;color:#333;letter-spacing:1.5px;word-spacing:0.0px;white-space:nowrap;">324<span style="margin-right:-2.4px">1</span><span style="margin-right:-1.6px">.</span>5</div><div style="position:absolute;top:103.69px;right:23.00px;font-size:11px;line-height:11px;color:#333;letter-spacing:1.5px;word-spacing:0.0px;white-space:nowrap;">25<span style="margin-right:-2.0px">,</span>932</div><div style="position:absolute;left:0;top:119.5px;width:1655px;height:1px;background:#cdcdcd;"></div><div style="position:absolute;top:127.69px;right:1470.50px;font-size:11px;line-height:11px;color:#333;letter-spacing:1.5px;word-spacing:0.0px;white-space:nowrap;">6839</div><div style="position:absolute;top:127.69px;left:214.75px;font-size:11px;line-height:11px;color:#333;letter-spacing:1.15px;word-spacing:-0.5px;white-space:nowrap;">Exterior Construction</div><div style="position:absolute;top:127.69px;left:421px;font-size:11px;line-height:11px;color:#333;letter-spacing:1.15px;word-spacing:-0.5px;white-space:nowrap;">sqft</div><div style="position:absolute;top:127.69px;right:849.35px;font-size:11px;line-height:11px;color:#333;letter-spacing:1.15px;word-spacing:-0.5px;white-space:nowrap;">USD - Dollar (USA)</div><div style="position:absolute;top:127.69px;right:642.50px;font-size:11px;line-height:11px;color:#333;letter-spacing:1.5px;word-spacing:0.0px;white-space:nowrap;">65</div><div style="position:absolute;top:127.69px;left:1042.5px;font-size:11px;line-height:11px;color:#333;letter-spacing:1.15px;word-spacing:-0.5px;white-space:nowrap;">Size</div><div style="position:absolute;top:127.69px;right:228.50px;font-size:11px;line-height:11px;color:#333;letter-spacing:1.5px;word-spacing:0.0px;white-space:nowrap;">324<span style="margin-right:-2.4px">1</span><span style="margin-right:-1.6px">.</span>5</div><div style="position:absolute;top:127.69px;right:23.00px;font-size:11px;line-height:11px;color:#333;letter-spacing:1.5px;word-spacing:0.0px;white-space:nowrap;">2<span style="margin-right:-2.4px">1</span>0<span style="margin-right:-2.0px">,</span>697<span style="margin-right:-1.6px">.</span>50</div><div style="position:absolute;left:0;top:143.5px;width:1655px;height:1px;background:#cdcdcd;"></div><div style="position:absolute;top:151.69px;right:1470.50px;font-size:11px;line-height:11px;color:#333;letter-spacing:1.5px;word-spacing:0.0px;white-space:nowrap;">6840</div><div style="position:absolute;top:151.69px;left:214.75px;font-size:11px;line-height:11px;color:#333;letter-spacing:1.15px;word-spacing:-0.5px;white-space:nowrap;">Interior Construction</div><div style="position:absolute;top:151.69px;left:421px;font-size:11px;line-height:11px;color:#333;letter-spacing:1.15px;word-spacing:-0.5px;white-space:nowrap;">sqft</div><div style="position:absolute;top:151.69px;right:849.35px;font-size:11px;line-height:11px;color:#333;letter-spacing:1.15px;word-spacing:-0.5px;white-space:nowrap;">USD - Dollar (USA)</div><div style="position:absolute;top:151.69px;right:642.50px;font-size:11px;line-height:11px;color:#333;letter-spacing:1.5px;word-spacing:0.0px;white-space:nowrap;">85</div><div style="position:absolute;top:151.69px;left:1042.5px;font-size:11px;line-height:11px;color:#333;letter-spacing:1.15px;word-spacing:-0.5px;white-space:nowrap;">Size</div><div style="position:absolute;top:151.69px;right:228.50px;font-size:11px;line-height:11px;color:#333;letter-spacing:1.5px;word-spacing:0.0px;white-space:nowrap;">324<span style="margin-right:-2.4px">1</span><span style="margin-right:-1.6px">.</span>5</div><div style="position:absolute;top:151.69px;right:23.00px;font-size:11px;line-height:11px;color:#333;letter-spacing:1.5px;word-spacing:0.0px;white-space:nowrap;">275<span style="margin-right:-2.0px">,</span>527<span style="margin-right:-1.6px">.</span>50</div><div style="position:absolute;left:0;top:167.5px;width:1655px;height:1px;background:#cdcdcd;"></div><div style="position:absolute;top:175.69px;right:1470.50px;font-size:11px;line-height:11px;color:#333;letter-spacing:1.5px;word-spacing:0.0px;white-space:nowrap;">6841</div><div style="position:absolute;top:175.69px;left:214.75px;font-size:11px;line-height:11px;color:#333;letter-spacing:1.15px;word-spacing:-0.5px;white-space:nowrap;">Common Area Construction</div><div style="position:absolute;top:175.69px;left:421px;font-size:11px;line-height:11px;color:#333;letter-spacing:1.15px;word-spacing:-0.5px;white-space:nowrap;">sqft</div><div style="position:absolute;top:175.69px;right:849.35px;font-size:11px;line-height:11px;color:#333;letter-spacing:1.15px;word-spacing:-0.5px;white-space:nowrap;">USD - Dollar (USA)</div><div style="position:absolute;top:175.69px;right:642.50px;font-size:11px;line-height:11px;color:#333;letter-spacing:1.5px;word-spacing:0.0px;white-space:nowrap;">50</div><div style="position:absolute;top:175.69px;left:1042.5px;font-size:11px;line-height:11px;color:#333;letter-spacing:1.15px;word-spacing:-0.5px;white-space:nowrap;">Size</div><div style="position:absolute;top:175.69px;right:228.50px;font-size:11px;line-height:11px;color:#333;letter-spacing:1.5px;word-spacing:0.0px;white-space:nowrap;">324<span style="margin-right:-2.4px">1</span><span style="margin-right:-1.6px">.</span>5</div><div style="position:absolute;top:175.69px;right:23.00px;font-size:11px;line-height:11px;color:#333;letter-spacing:1.5px;word-spacing:0.0px;white-space:nowrap;"><span style="margin-right:-2.4px">1</span>62<span style="margin-right:-2.0px">,</span>075</div><div style="position:absolute;left:0;top:191.5px;width:1655px;height:1px;background:#cdcdcd;"></div><div style="position:absolute;top:199.69px;right:1470.50px;font-size:11px;line-height:11px;color:#333;letter-spacing:1.5px;word-spacing:0.0px;white-space:nowrap;">6842</div><div style="position:absolute;top:199.69px;left:214.75px;font-size:11px;line-height:11px;color:#333;letter-spacing:1.15px;word-spacing:-0.5px;white-space:nowrap;">Parking Garage Construction</div><div style="position:absolute;top:199.69px;left:421px;font-size:11px;line-height:11px;color:#333;letter-spacing:1.15px;word-spacing:-0.5px;white-space:nowrap;"></div><div style="position:absolute;top:199.69px;right:849.35px;font-size:11px;line-height:11px;color:#333;letter-spacing:1.15px;word-spacing:-0.5px;white-space:nowrap;">USD - Dollar (USA)</div><div style="position:absolute;top:199.69px;right:642.50px;font-size:11px;line-height:11px;color:#333;letter-spacing:1.5px;word-spacing:0.0px;white-space:nowrap;"><span style="margin-right:-2.4px">1</span>3<span style="margin-right:-2.0px">,</span>000</div><div style="position:absolute;top:199.69px;left:1042.5px;font-size:11px;line-height:11px;color:#333;letter-spacing:1.5px;word-spacing:0.0px;white-space:nowrap;"><span style="margin-right:-2.4px">1</span><span style="margin-right:-1.6px">.</span>00</div><div style="position:absolute;top:199.69px;right:228.50px;font-size:11px;line-height:11px;color:#333;letter-spacing:1.5px;word-spacing:0.0px;white-space:nowrap;">1</div><div style="position:absolute;top:199.69px;right:23.00px;font-size:11px;line-height:11px;color:#333;letter-spacing:1.5px;word-spacing:0.0px;white-space:nowrap;"><span style="margin-right:-2.4px">1</span>3<span style="margin-right:-2.0px">,</span>000</div><div style="position:absolute;left:0;top:215.5px;width:1655px;height:1px;background:#cdcdcd;"></div><div style="position:absolute;top:223.69px;right:1470.50px;font-size:11px;line-height:11px;color:#333;letter-spacing:1.5px;word-spacing:0.0px;white-space:nowrap;">6843</div><div style="position:absolute;top:223.69px;left:214.75px;font-size:11px;line-height:11px;color:#333;letter-spacing:1.15px;word-spacing:-0.5px;white-space:nowrap;">Furniture &amp; Fixtures</div><div style="position:absolute;top:223.69px;left:421px;font-size:11px;line-height:11px;color:#333;letter-spacing:1.15px;word-spacing:-0.5px;white-space:nowrap;">sqft</div><div style="position:absolute;top:223.69px;right:849.35px;font-size:11px;line-height:11px;color:#333;letter-spacing:1.15px;word-spacing:-0.5px;white-space:nowrap;">USD - Dollar (USA)</div><div style="position:absolute;top:223.69px;right:642.50px;font-size:11px;line-height:11px;color:#333;letter-spacing:1.5px;word-spacing:0.0px;white-space:nowrap;"><span style="margin-right:-2.4px">1</span>5</div><div style="position:absolute;top:223.69px;left:1042.5px;font-size:11px;line-height:11px;color:#333;letter-spacing:1.15px;word-spacing:-0.5px;white-space:nowrap;">Size</div><div style="position:absolute;top:223.69px;right:228.50px;font-size:11px;line-height:11px;color:#333;letter-spacing:1.5px;word-spacing:0.0px;white-space:nowrap;">324<span style="margin-right:-2.4px">1</span><span style="margin-right:-1.6px">.</span>5</div><div style="position:absolute;top:223.69px;right:23.00px;font-size:11px;line-height:11px;color:#333;letter-spacing:1.5px;word-spacing:0.0px;white-space:nowrap;">48<span style="margin-right:-2.0px">,</span>622<span style="margin-right:-1.6px">.</span>50</div><div style="position:absolute;left:0;top:239.5px;width:1655px;height:1px;background:#cdcdcd;"></div><div style="position:absolute;top:247.69px;right:1470.50px;font-size:11px;line-height:11px;color:#333;letter-spacing:1.5px;word-spacing:0.0px;white-space:nowrap;">6844</div><div style="position:absolute;top:247.69px;left:214.75px;font-size:11px;line-height:11px;color:#333;letter-spacing:1.15px;word-spacing:-0.5px;white-space:nowrap;">A/V Equipment</div><div style="position:absolute;top:247.69px;left:421px;font-size:11px;line-height:11px;color:#333;letter-spacing:1.15px;word-spacing:-0.5px;white-space:nowrap;">sqft</div><div style="position:absolute;top:247.69px;right:849.35px;font-size:11px;line-height:11px;color:#333;letter-spacing:1.15px;word-spacing:-0.5px;white-space:nowrap;">USD - Dollar (USA)</div><div style="position:absolute;top:247.69px;right:642.50px;font-size:11px;line-height:11px;color:#333;letter-spacing:1.5px;word-spacing:0.0px;white-space:nowrap;"><span style="margin-right:-2.4px">1</span>0</div><div style="position:absolute;top:247.69px;left:1042.5px;font-size:11px;line-height:11px;color:#333;letter-spacing:1.15px;word-spacing:-0.5px;white-space:nowrap;">Size</div><div style="position:absolute;top:247.69px;right:228.50px;font-size:11px;line-height:11px;color:#333;letter-spacing:1.5px;word-spacing:0.0px;white-space:nowrap;">324<span style="margin-right:-2.4px">1</span><span style="margin-right:-1.6px">.</span>5</div><div style="position:absolute;top:247.69px;right:23.00px;font-size:11px;line-height:11px;color:#333;letter-spacing:1.5px;word-spacing:0.0px;white-space:nowrap;">32<span style="margin-right:-2.0px">,</span>4<span style="margin-right:-2.4px">1</span>5</div><div style="position:absolute;left:0;top:263.5px;width:1655px;height:1px;background:#cdcdcd;"></div><div style="position:absolute;top:271.69px;right:1470.50px;font-size:11px;line-height:11px;color:#333;letter-spacing:1.5px;word-spacing:0.0px;white-space:nowrap;">6845</div><div style="position:absolute;top:271.69px;left:214.75px;font-size:11px;line-height:11px;color:#333;letter-spacing:1.15px;word-spacing:-0.5px;white-space:nowrap;">Signage</div><div style="position:absolute;top:271.69px;left:421px;font-size:11px;line-height:11px;color:#333;letter-spacing:1.15px;word-spacing:-0.5px;white-space:nowrap;">sqft</div><div style="position:absolute;top:271.69px;right:849.35px;font-size:11px;line-height:11px;color:#333;letter-spacing:1.15px;word-spacing:-0.5px;white-space:nowrap;">USD - Dollar (USA)</div><div style="position:absolute;top:271.69px;right:642.50px;font-size:11px;line-height:11px;color:#333;letter-spacing:1.5px;word-spacing:0.0px;white-space:nowrap;">5</div><div style="position:absolute;top:271.69px;left:1042.5px;font-size:11px;line-height:11px;color:#333;letter-spacing:1.15px;word-spacing:-0.5px;white-space:nowrap;">Size</div><div style="position:absolute;top:271.69px;right:228.50px;font-size:11px;line-height:11px;color:#333;letter-spacing:1.5px;word-spacing:0.0px;white-space:nowrap;">324<span style="margin-right:-2.4px">1</span><span style="margin-right:-1.6px">.</span>5</div><div style="position:absolute;top:271.69px;right:23.00px;font-size:11px;line-height:11px;color:#333;letter-spacing:1.5px;word-spacing:0.0px;white-space:nowrap;"><span style="margin-right:-2.4px">1</span>6<span style="margin-right:-2.0px">,</span>207<span style="margin-right:-1.6px">.</span>50</div></div>
<div style="position:absolute;left:2013px;top:507px;width:17px;height:281px;box-sizing:border-box;background:#f0f0f0;"></div>
<div style="position:absolute;left:2015px;top:525px;width:13px;height:204px;box-sizing:border-box;background:#c1c1c1;"></div>
<svg style="position:absolute;left:2016px;top:513px" width="12" height="8"><path d="M1 6 H11 L6 1 Z" fill="#a3a3a3"/></svg>
<svg style="position:absolute;left:2016px;top:775px" width="12" height="8"><path d="M1 1 H11 L6 6 Z" fill="#505050"/></svg>
<div style="position:absolute;left:358px;top:788px;width:1672px;height:24px;box-sizing:border-box;background:#999;border-top:1px solid #7a7a7a;"></div>
<div style="position:absolute;top:795.24px;font-size:12px;line-height:12px;color:#f2f2f2;white-space:nowrap;letter-spacing:0.55px;font-weight:700;right:35.5px;">$983,586.00</div>
<svg style="position:absolute;left:0;top:0" width="2059" height="840" viewBox="0 0 2059 840"><g stroke="#6ab42e" stroke-width="1.1" fill="none"><path d="M271 34.5 L361 37.5"/><path d="M271 125 L352 106"/><path d="M271 214.6 L1619 100.4"/><path d="M271 304 L357 243"/><path d="M271 395 L358 470"/></g><circle cx="271" cy="34" r="14" fill="#6ab42e"/><circle cx="271" cy="124" r="14" fill="#6ab42e"/><circle cx="271" cy="214" r="14" fill="#6ab42e"/><circle cx="271" cy="304" r="14" fill="#6ab42e"/><circle cx="271" cy="395" r="14" fill="#6ab42e"/></svg>
<div style="position:absolute;top:27.35px;font-size:14px;line-height:14px;color:#fff;white-space:nowrap;font-weight:700;left:-28.80000000000001px;width:600px;text-align:center;">1</div>
<div style="position:absolute;top:117.35px;font-size:14px;line-height:14px;color:#fff;white-space:nowrap;font-weight:700;left:-28.80000000000001px;width:600px;text-align:center;">2</div>
<div style="position:absolute;top:207.35px;font-size:14px;line-height:14px;color:#fff;white-space:nowrap;font-weight:700;left:-28.80000000000001px;width:600px;text-align:center;">3</div>
<div style="position:absolute;top:297.35px;font-size:14px;line-height:14px;color:#fff;white-space:nowrap;font-weight:700;left:-28.80000000000001px;width:600px;text-align:center;">4</div>
<div style="position:absolute;top:388.35px;font-size:14px;line-height:14px;color:#fff;white-space:nowrap;font-weight:700;left:-28.80000000000001px;width:600px;text-align:center;">5</div>
</body></html>
